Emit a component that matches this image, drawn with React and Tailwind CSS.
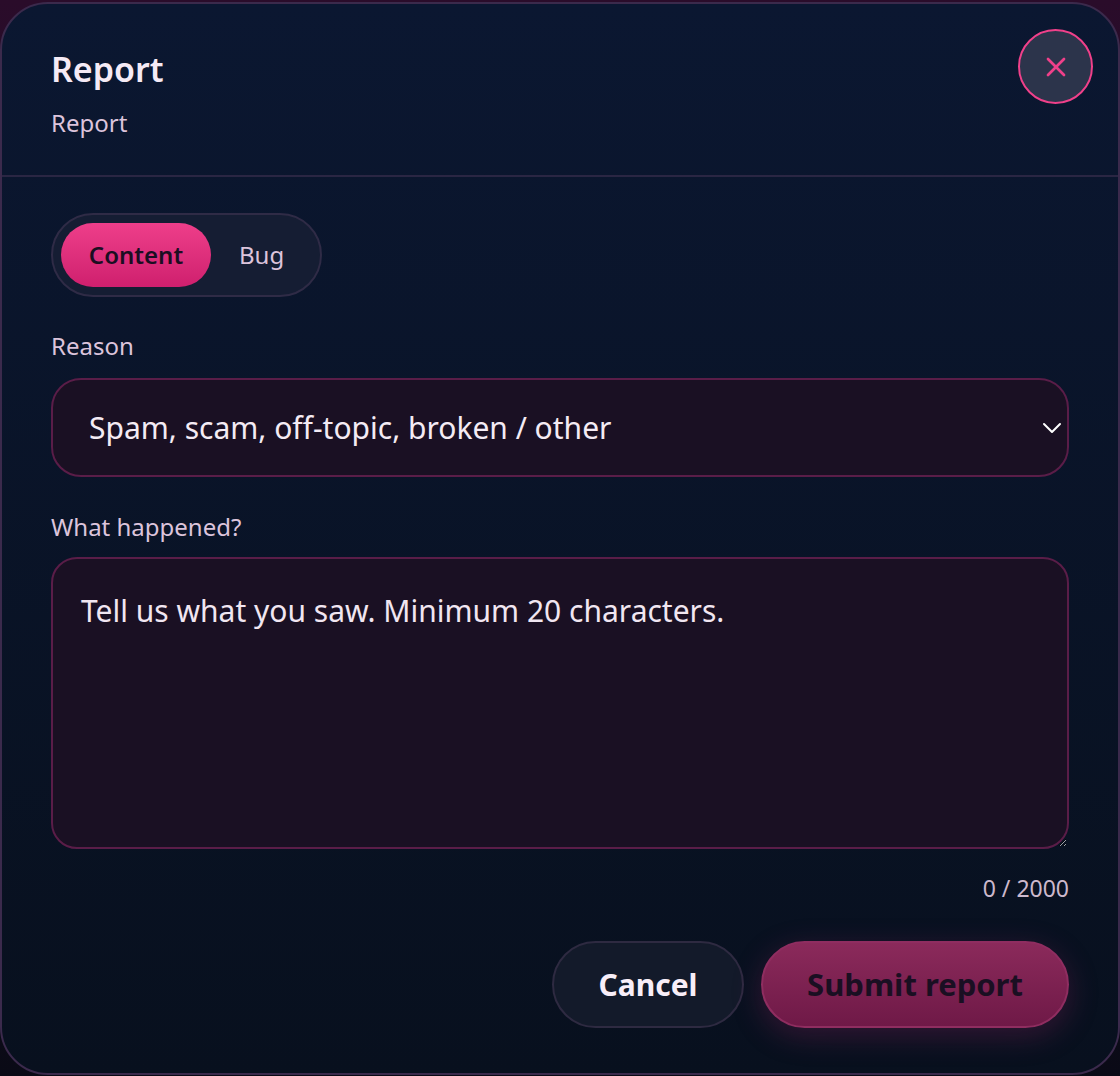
import React, { useState } from "react";
import { X } from "lucide-react";

const App = () => {
  const [kind, setKind] = useState("content");
  const [text, setText] = useState("");

  return (
    <div
      className="min-h-screen w-full bg-gradient-to-b from-[#2a0c2a] to-[#0a0a16] pt-[2px]"
      style={{ fontFamily: '"Noto Sans", "Open Sans", sans-serif' }}
    >
      <div className="w-[1120px] h-[1073px] rounded-[48px] border-2 border-[#3b2a4c] bg-gradient-to-b from-[#0b1731] to-[#08101e] flex flex-col overflow-hidden">
        {/* header */}
        <div className="flex justify-between items-start pl-[49px] pr-[25px] pt-[41px] h-[173px] border-b-2 border-[#2a2643]">
          <div className="flex flex-col">
            <h1 className="text-[34px] leading-[48px] font-semibold text-[#f5eaf5]">Report</h1>
            <p className="text-[24px] leading-[34px] mt-[13px] text-[#dcc4dc]">Report</p>
          </div>
          <button className="w-[75px] h-[75px] -mt-[16px] rounded-full border-2 border-[#f0408a] bg-[#2c344b] flex items-center justify-center text-[#f0408a]">
            <X size={32} strokeWidth={2} />
          </button>
        </div>

        {/* body */}
        <div className="flex flex-col px-[49px] pt-[36px]">
          <div className="flex items-center w-[271px] h-[84px] rounded-full border-2 border-[#2f2b46] bg-[#151d33] px-[8px] gap-[10px]">
            <button
              onClick={() => setKind("content")}
              className={`h-[64px] w-[150px] rounded-full text-[24px] font-semibold ${
                kind === "content"
                  ? "bg-gradient-to-b from-[#ee3e8a] to-[#cf1f6e] text-[#1b0e22]"
                  : "text-[#dcc4dc]"
              }`}
            >
              Content
            </button>
            <button
              onClick={() => setKind("bug")}
              className={`h-[64px] px-[18px] rounded-full text-[24px] ${
                kind === "bug"
                  ? "bg-gradient-to-b from-[#ee3e8a] to-[#cf1f6e] text-[#1b0e22] font-semibold"
                  : "text-[#dcc4dc]"
              }`}
            >
              Bug
            </button>
          </div>

          <label className="mt-[34px] text-[24px] leading-[30px] text-[#dcc4dc]">Reason</label>
          <div className="relative mt-[17px]">
            <select className="appearance-none w-full h-[99px] rounded-[30px] border-2 border-[#5a1d48] bg-[#1a1023] pl-[36px] pr-[60px] text-[30px] text-[#f4ebf4] outline-none">
              <option>Spam, scam, off-topic, broken / other</option>
            </select>
            <svg
              width="20"
              height="12"
              viewBox="0 0 20 12"
              fill="none"
              stroke="white"
              strokeWidth="2"
              strokeLinecap="round"
              strokeLinejoin="round"
              className="absolute right-[7px] top-[44px] pointer-events-none"
            >
              <polyline points="2,2 10,10 18,2" />
            </svg>
          </div>

          <label className="mt-[35px] text-[24px] leading-[30px] text-[#dcc4dc]">What happened?</label>
          <textarea
            value={text}
            onChange={(e) => setText(e.target.value)}
            placeholder="Tell us what you saw. Minimum 20 characters."
            className="mt-[15px] h-[292px] rounded-[26px] border-2 border-[#5a1d48] bg-[#1a1023] px-[28px] py-[32px] text-[30px] leading-[40px] text-[#f4ebf4] placeholder-[#f1e6f1] outline-none"
          />
          <div className="mt-[24px] text-right text-[23px] leading-[30px] text-[#cdb9cd]">
            {text.length} / 2000
          </div>

          <div className="flex justify-end gap-[17px] mt-[38px]">
            <button className="h-[87px] w-[192px] rounded-full border-2 border-[#2e2a41] bg-[#131a2a] text-[30px] font-bold text-[#f8eef8]">
              Cancel
            </button>
            <button className="h-[87px] w-[308px] rounded-full border-2 border-[#8f2d60] bg-gradient-to-b from-[#8b2a5b] to-[#6f1947] text-[31px] font-bold text-[#1a0f22] shadow-[0_8px_30px_rgba(180,40,110,0.25)]">
              Submit report
            </button>
          </div>
        </div>
      </div>
    </div>
  );
};

export default App;
